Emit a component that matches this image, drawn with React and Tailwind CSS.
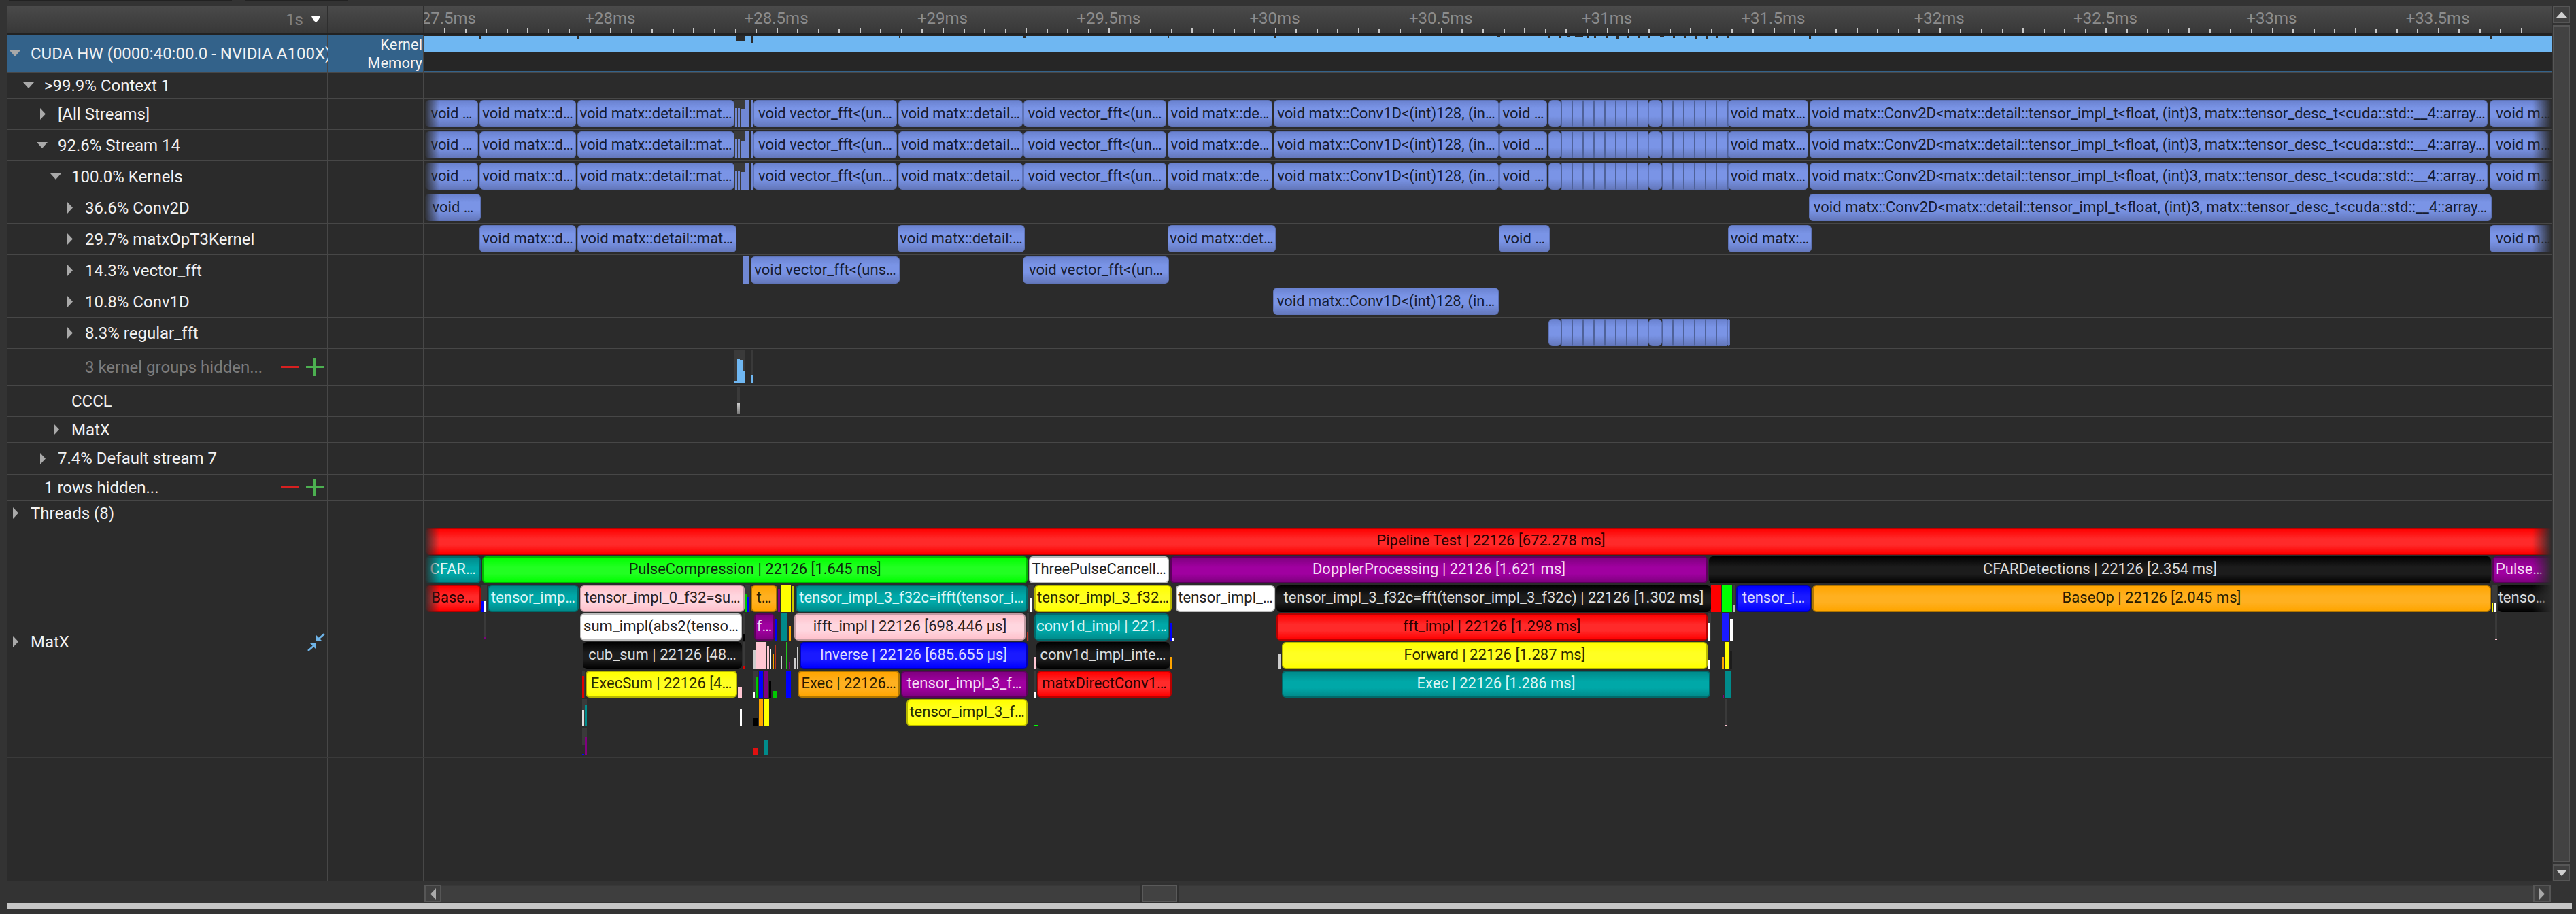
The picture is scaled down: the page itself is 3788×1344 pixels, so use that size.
import React from 'react';

const ORIGIN = 624;

// colour → gradient/border/text classes used by the flame chart
const TONES = {
  kernel: 'bg-[linear-gradient(#6a82d0,#7a94e6_30%,#7a94e6_60%,#6478bc)] border border-[#5f74b8] text-[#161c30]',
  red: 'bg-[linear-gradient(#ff0000,#ff2a2a_40%,#ff2a2a_65%,#ff0000)] border-2 border-[#b80000] text-[#2a0000]',
  green: 'bg-[linear-gradient(#00ff00,#22ff22_40%,#22ff22_65%,#00ff00)] border-2 border-[#00b800] text-[#0c2a0c]',
  white: 'bg-white border-2 border-[#bdbdbd] text-[#222222]',
  pink: 'bg-[linear-gradient(#ffc0cb,#ffd6df_40%,#ffd6df_65%,#ffc0cb)] border-2 border-[#c09aa2] text-[#2a2022]',
  teal: 'bg-[linear-gradient(#008b8b,#00a8a8_40%,#00a8a8_65%,#008b8b)] border-2 border-[#006a6a] text-[#dcf5f5]',
  purple: 'bg-[linear-gradient(#800080,#a000a0_40%,#a000a0_65%,#800080)] border-2 border-[#5c005c] text-[#f3dcf3]',
  black: 'bg-[linear-gradient(#000000,#1c1c1c_40%,#1c1c1c_65%,#000000)] text-[#dddddd]',
  yellow: 'bg-[linear-gradient(#ffff00,#ffff22_40%,#ffff22_65%,#ffff00)] border-2 border-[#b8b800] text-[#2a2a00]',
  orange: 'bg-[linear-gradient(#ffa500,#ffb020_40%,#ffb020_65%,#ffa500)] border-2 border-[#b07600] text-[#2a1c00]',
  blue: 'bg-[linear-gradient(#0000ff,#1a1aff_40%,#1a1aff_65%,#0000ff)] border-2 border-[#0000b4] text-[#dcdcff]',
};

const tickLabels = ['+27.5ms', '+28ms', '+28.5ms', '+29ms', '+29.5ms', '+30ms', '+30.5ms', '+31ms', '+31.5ms', '+32ms', '+32.5ms', '+33ms', '+33.5ms'];

const notches = [
  [705, 2, 4], [849, 2, 4], [1082, 14, 7], [1105, 2, 10], [1322, 2, 3], [1505, 3, 3], [1717, 2, 3], [1873, 3, 3],
  [2202, 4, 2], [2277, 2, 3], [2293, 3, 3], [2304, 4, 2], [2316, 12, 1], [2334, 3, 3], [2344, 3, 3], [2361, 3, 3],
  [2377, 3, 4], [2393, 3, 3], [2408, 3, 3], [2424, 3, 3], [2441, 6, 2], [2460, 3, 3], [2476, 3, 3], [2492, 3, 4],
  [2508, 3, 4], [2524, 3, 3], [2540, 3, 3], [2660, 3, 4], [3661, 3, 4],
];

const STRIPES = [2296, 2312, 2328, 2344, 2360, 2376, 2392, 2408];
const STRIPES2 = [2444, 2460, 2476, 2492, 2508, 2524];

const fftBlocks = (end) => [
  [2277, 2296, '', 'round'],
  ...STRIPES.map((x) => [x, x + 16, '', 'flat']),
  [2424, 2444, '', 'round'],
  ...STRIPES2.map((x) => [x, x + 16, '', 'flat']),
  [2540, end, '', end > 2541 ? 'round' : 'flat'],
];

const streamBlocks = [
  [625, 703, 'void …'],
  [705, 847, 'void matx::d…'],
  [849, 1080, 'void matx::detail::mat…'],
  [1108, 1319, 'void vector_fft<(un…'],
  [1321, 1504, 'void matx::detail…'],
  [1505, 1715, 'void vector_fft<(un…'],
  [1717, 1871, 'void matx::de…'],
  [1873, 2204, 'void matx::Conv1D<(int)128, (in…'],
  [2205, 2275, 'void …'],
  ...fftBlocks(2541),
  [2541, 2659, 'void matx…'],
  [2661, 3658, 'void matx::Conv2D<matx::detail::tensor_impl_t<float, (int)3, matx::tensor_desc_t<cuda::std::__4::array…'],
  [3661, 3760, 'void m…'],
];

const kernelTiny = [
  [1080, 16, 0, 40, 'bg-[#3a3a3a]'],
  [1081, 3, 12, 28, 'bg-[#7088d4]'],
  [1085, 3, 12, 28, 'bg-[#7088d4]'],
  [1089, 3, 14, 26, 'bg-[#7088d4]'],
  [1093, 3, 14, 26, 'bg-[#7088d4]'],
  [1096, 6, 0, 40, 'bg-[#7088d4]'],
  [1104, 3, 0, 40, 'bg-[#7088d4]'],
];

const events = [
  // row, x0, x1, tone, label
  [0, 625, 3760, 'red', 'Pipeline Test | 22126 [672.278 ms]'],
  [1, 625, 707, 'teal', 'CFAR…'],
  [1, 709, 1511, 'green', 'PulseCompression | 22126 [1.645 ms]'],
  [1, 1513, 1719, 'white', 'ThreePulseCancell…'],
  [1, 1721, 2511, 'purple', 'DopplerProcessing | 22126 [1.621 ms]'],
  [1, 2513, 3663, 'black', 'CFARDetections | 22126 [2.354 ms]'],
  [1, 3665, 3760, 'purple', 'Pulse…', 'pr-4'],
  [2, 625, 707, 'red', 'Base…'],
  [2, 717, 851, 'teal', 'tensor_imp…'],
  [2, 853, 1095, 'pink', 'tensor_impl_0_f32=su…'],
  [2, 1104, 1143, 'orange', 't…'],
  [2, 1170, 1511, 'teal', 'tensor_impl_3_f32c=ifft(tensor_i…'],
  [2, 1521, 1723, 'yellow', 'tensor_impl_3_f32…'],
  [2, 1729, 1875, 'white', 'tensor_impl_…'],
  [2, 1877, 2516, 'black', 'tensor_impl_3_f32c=fft(tensor_impl_3_f32c) | 22126 [1.302 ms]'],
  [2, 2553, 2663, 'blue', 'tensor_i…'],
  [2, 2665, 3663, 'orange', 'BaseOp | 22126 [2.045 ms]'],
  [2, 3673, 3760, 'black', 'tenso…', 'pr-4'],
  [3, 853, 1091, 'white', 'sum_impl(abs2(tenso…'],
  [3, 1109, 1139, 'purple', 'f…'],
  [3, 1168, 1508, 'pink', 'ifft_impl | 22126 [698.446 µs]'],
  [3, 1521, 1719, 'teal', 'conv1d_impl | 221…'],
  [3, 1877, 2511, 'red', 'fft_impl | 22126 [1.298 ms]'],
  [4, 857, 1091, 'black', 'cub_sum | 22126 [48…'],
  [4, 1176, 1511, 'blue', 'Inverse | 22126 [685.655 µs]'],
  [4, 1524, 1720, 'black', 'conv1d_impl_inte…'],
  [4, 1885, 2511, 'yellow', 'Forward | 22126 [1.287 ms]'],
  [5, 861, 1084, 'yellow', 'ExecSum | 22126 [4…'],
  [5, 1173, 1323, 'orange', 'Exec | 22126…'],
  [5, 1325, 1511, 'purple', 'tensor_impl_3_f…'],
  [5, 1525, 1723, 'red', 'matxDirectConv1…'],
  [5, 1885, 2515, 'teal', 'Exec | 22126 [1.286 ms]'],
  [6, 1333, 1511, 'yellow', 'tensor_impl_3_f…'],
];

// slivers too narrow to hold a label: row, x, width, top, height, colour
const slivers = [
  [2, 708, 8, 0, 40, 'bg-[#3a3a3a]'], [2, 708, 3, 24, 16, 'bg-[#0000ff]'], [2, 711, 3, 24, 16, 'bg-white'],
  [3, 711, 4, 0, 36, 'bg-[#3a3a3a]'], [3, 711, 3, 35, 2, 'bg-[#800080]'],
  [2, 1096, 7, 0, 40, 'bg-[#3a3a3a]'], [2, 1096, 2, 14, 26, 'bg-[#00c800]'], [2, 1099, 3, 18, 22, 'bg-[#0000ff]'],
  [2, 1144, 3, 6, 34, 'bg-[#800080]'], [2, 1148, 15, 0, 40, 'bg-[#ffff00]'], [2, 1164, 3, 2, 38, 'bg-[#c8c800]'],
  [2, 1512, 8, 0, 40, 'bg-[#3a3a3a]'], [2, 1515, 2, 20, 20, 'bg-white'],
  [2, 2516, 15, 0, 40, 'bg-[#ff0000]'], [2, 2532, 15, 0, 40, 'bg-[#00ff00]'], [2, 2548, 3, 0, 40, 'bg-[#3a3a3a]'], [2, 2548, 3, 30, 10, 'bg-[#bbbbbb]'],
  [2, 3664, 8, 0, 40, 'bg-[#3a3a3a]'], [2, 3664, 2, 26, 14, 'bg-[#ffff00]'], [2, 3668, 2, 26, 14, 'bg-white'],
  [3, 1092, 4, 0, 40, 'bg-[#3a3a3a]'], [3, 1092, 3, 30, 10, 'bg-black'],
  [3, 1140, 3, 8, 32, 'bg-[#0000ff]'], [3, 1148, 10, 0, 40, 'bg-[#008b8b]'], [3, 1160, 3, 18, 22, 'bg-[#ffa500]'],
  [3, 1510, 3, 0, 40, 'bg-[#3a3a3a]'], [3, 1510, 2, 28, 12, 'bg-[#b83020]'],
  [3, 1720, 3, 14, 26, 'bg-[#0000ff]'], [3, 1724, 3, 36, 4, 'bg-white'],
  [3, 2512, 4, 0, 40, 'bg-[#3a3a3a]'], [3, 2512, 3, 14, 26, 'bg-white'],
  [3, 2532, 11, 0, 40, 'bg-[#1a1aff]'], [3, 2544, 4, 8, 32, 'bg-white'],
  [4, 1092, 4, 0, 40, 'bg-[#3a3a3a]'], [4, 1092, 3, 36, 4, 'bg-[#e00000]'],
  [4, 1108, 3, 12, 28, 'bg-[#cccccc]'], [4, 1112, 15, 0, 40, 'bg-[#ffc6d2]'], [4, 1128, 3, 6, 34, 'bg-[#ffc6d2]'], [4, 1132, 2, 10, 30, 'bg-white'],
  [4, 1136, 2, 18, 22, 'bg-[#ffa500]'], [4, 1139, 2, 4, 36, 'bg-[#b83020]'], [4, 1148, 2, 20, 20, 'bg-[#cccccc]'], [4, 1156, 2, 0, 40, 'bg-[#22c822]'],
  [4, 1160, 2, 30, 10, 'bg-[#800080]'], [4, 1168, 3, 24, 16, 'bg-[#cccccc]'], [4, 1172, 2, 8, 32, 'bg-[#cccccc]'],
  [4, 1520, 3, 22, 18, 'bg-[#ffc6d2]'], [4, 1720, 3, 22, 18, 'bg-[#ffa500]'], [4, 1880, 3, 18, 22, 'bg-[#cccccc]'],
  [4, 2512, 3, 26, 14, 'bg-white'], [4, 2532, 3, 22, 18, 'bg-[#ffa500]'], [4, 2536, 7, 0, 40, 'bg-[#ffff00]'], [4, 2544, 3, 14, 26, 'bg-[#1c1c1c]'],
  [5, 856, 4, 0, 40, 'bg-[#3a3a3a]'], [5, 856, 3, 8, 32, 'bg-[#e00000]'],
  [5, 1085, 6, 24, 16, 'bg-[#ffc6d2]'],
  [5, 1108, 7, 0, 40, 'bg-[#3a3a3a]'], [5, 1108, 2, 32, 8, 'bg-white'], [5, 1112, 2, 10, 30, 'bg-[#00c800]'], [5, 1116, 6, 0, 40, 'bg-[#0000ff]'],
  [5, 1123, 7, 0, 40, 'bg-[#800080]'], [5, 1131, 3, 16, 24, 'bg-black'], [5, 1136, 7, 30, 10, 'bg-[#00c800]'], [5, 1156, 7, 0, 40, 'bg-[#0000ff]'],
  [5, 1520, 3, 0, 40, 'bg-[#3a3a3a]'], [5, 1520, 3, 32, 8, 'bg-white'], [5, 2536, 10, 0, 40, 'bg-[#008b8b]'], [5, 2533, 2, 36, 4, 'bg-[#800080]'],
  [6, 856, 7, 0, 40, 'bg-[#3a3a3a]'], [6, 860, 3, 8, 32, 'bg-[#008b8b]'], [6, 856, 3, 16, 24, 'bg-[#dddddd]'],
  [6, 1088, 3, 14, 26, 'bg-white'], [6, 1108, 7, 28, 12, 'bg-black'], [6, 1116, 6, 0, 40, 'bg-[#ffa500]'], [6, 1123, 8, 0, 40, 'bg-[#ffff00]'],
  [6, 1520, 6, 38, 2, 'bg-[#00ff00]'], [6, 2537, 2, 0, 38, 'bg-[#3a3a3a]'], [6, 2537, 2, 38, 2, 'bg-[#ffc6d2]'],
  [7, 856, 7, 0, 26, 'bg-[#3a3a3a]'], [7, 860, 3, 14, 26, 'bg-[#800080]'], [7, 856, 3, 38, 2, 'bg-[#0000ff]'],
  [7, 1108, 7, 30, 10, 'bg-[#e01010]'], [7, 1124, 6, 18, 22, 'bg-[#008b8b]'],
  [3, 3669, 3, 0, 38, 'bg-[#3a3a3a]'], [3, 3669, 3, 37, 2, 'bg-[#ffc6d2]'],
];

const Caret = ({ open }) =>
  open ? (
    <svg width="16" height="9" className="shrink-0">
      <polygon points="0,0 16,0 8,9" fill="#a9a9a9" />
    </svg>
  ) : (
    <svg width="8" height="17" className="ml-[5px] shrink-0">
      <polygon points="0,0 8,8.5 0,17" fill="#a9a9a9" />
    </svg>
  );

const HiddenControls = () => (
  <svg width="63" height="26" className="ml-auto mr-[5px] shrink-0">
    <rect x="0" y="11" width="26" height="3" fill="#d62020" />
    <rect x="37" y="11" width="26" height="3" fill="#4caf50" />
    <rect x="48" y="0" width="3" height="26" fill="#4caf50" />
  </svg>
);

const CollapseIcon = () => (
  <svg viewBox="12 6 26 26" width="26" height="26" className="ml-auto mr-[3px] shrink-0">
    <polygon points="25,9 25,18 34,18" fill="#6fb4e8" />
    <line x1="29" y1="14" x2="37" y2="7" stroke="#6fb4e8" strokeWidth="2.5" />
    <polygon points="15,20 25,20 25,30" fill="#6fb4e8" />
    <line x1="21" y1="25" x2="13" y2="32" stroke="#6fb4e8" strokeWidth="2.5" />
  </svg>
);

const Label = ({ pad, caret, tone = 'text-[#f2f2f2]', children, extra, selected }) => (
  <div className={`flex items-center h-full w-[472px] shrink-0 border-r-2 border-[#474747] ${pad} ${selected ? 'bg-[#33628a]' : ''}`}>
    <div className="w-[31px] shrink-0 flex items-center">{caret !== undefined && <Caret open={caret} />}</div>
    <span className={`whitespace-nowrap ${tone}`}>{children}</span>
    {extra}
  </div>
);

const KernelBlock = ({ x0, x1, label, shape }) => (
  <div
    className={`absolute top-[2px] h-[40px] pb-[2px] flex items-center justify-center overflow-hidden whitespace-nowrap text-[22px] ${TONES.kernel} ${shape === 'flat' ? 'rounded-none border-x-[#4f6299]' : 'rounded-[6px]'}`}
    style={{ left: x0 - ORIGIN, width: x1 - x0 }}
  >
    {label}
  </div>
);

const Sliver = ({ x, w, top, h, color }) => (
  <div className={`absolute ${color}`} style={{ left: x - ORIGIN, width: w, top, height: h }} />
);

const Fades = () => (
  <>
    <div className="absolute inset-y-0 left-0 w-[22px] bg-gradient-to-r from-[#2b2b2b] to-transparent" />
    <div className="absolute inset-y-0 right-0 w-[28px] bg-gradient-to-l from-[#2b2b2b] to-transparent" />
  </>
);

const Track = ({ children }) => <div className="relative flex-1 h-full overflow-hidden">{children}</div>;

const Row = ({ h, label, track, selected, info, line = 'border-[#474747]' }) => (
  <div className={`flex ${h} border-b ${line}`}>
    {label}
    <div className={`w-[141px] shrink-0 h-full border-r-2 border-[#474747] ${selected ? 'bg-[#33628a]' : ''}`}>{info}</div>
    <Track>{track}</Track>
  </div>
);

const KernelRow = ({ blocks, tiny = [] }) => (
  <>
    {tiny.map(([x, w, top, h, color], i) => (
      <Sliver key={i} x={x} w={w} top={top + 2} h={h} color={color} />
    ))}
    {blocks.map(([x0, x1, label, shape], i) => (
      <KernelBlock key={i} x0={x0} x1={x1} label={label} shape={shape} />
    ))}
    <Fades />
  </>
);

const FlameChart = () => (
  <>
    {slivers.map(([row, x, w, top, h, color], i) => (
      <Sliver key={i} x={x} w={w} top={2 + row * 42 + top} h={h} color={color} />
    ))}
    {events.map(([row, x0, x1, tone, label, extra], i) => (
      <div
        key={i}
        className={`absolute h-[40px] pb-[3px] flex items-center justify-center overflow-hidden whitespace-nowrap rounded-[6px] text-[22px] ${TONES[tone]} ${extra || ''}`}
        style={{ left: x0 - ORIGIN, width: x1 - x0, top: 2 + row * 42 }}
      >
        {label}
      </div>
    ))}
    <Fades />
  </>
);

const Ruler = () => (
  <div className="relative flex-1 h-full overflow-hidden bg-[linear-gradient(#4a4a4a,#383838)]">
    {tickLabels.map((text, i) => (
      <span
        key={text}
        className="absolute top-[3px] leading-[30px] w-[120px] text-center text-[#8c8c8c] whitespace-nowrap"
        style={{ left: 653 + i * 244.3 - ORIGIN - 60 }}
      >
        {text}
      </span>
    ))}
    <svg className="absolute left-0 top-0" width="3130" height="39">
      {Array.from({ length: 102 }, (_, k) => {
        const x = 653 + (k - 1) * 30.54 - ORIGIN;
        const major = (k - 1) % 4 === 0;
        return <rect key={k} x={Math.round(x)} y={major ? 32 : 34} width="2" height={major ? 7 : 5} fill="#c8c8c8" />;
      })}
    </svg>
  </div>
);

const ScrollButton = ({ className, children }) => (
  <div className={`flex items-center justify-center bg-[#404040] border-2 border-[#565656] ${className}`}>{children}</div>
);

export default function App() {
  return (
    <div className="w-[3788px] h-[1344px] flex flex-col overflow-hidden bg-[#333333] text-[24px] font-['Roboto',sans-serif]">
      <div className="flex h-[9px] shrink-0 items-start pl-[13px]">
        <div className="w-[328px] h-[1px] bg-[#222222]" />
        <div className="w-[152px] h-[1px] ml-[19px] bg-[#222222]" />
      </div>

      <div className="flex h-[1287px] shrink-0 pl-[11px]">
        <div className="w-[3741px] shrink-0 flex flex-col">
          <div className="flex h-[39px] shrink-0">
            <div className="w-[472px] shrink-0 flex items-center justify-end pr-[10px] border-r-2 border-[#2e2e2e] bg-[linear-gradient(#4a4a4a,#383838)]">
              <span className="text-[#808080] mr-[12px]">1s</span>
              <svg width="13" height="9">
                <path d="M0,0 H13 L10,6 L6.5,9 L3,6 Z" fill="#ffffff" />
              </svg>
            </div>
            <div className="w-[141px] shrink-0 border-r-2 border-[#2e2e2e] bg-[linear-gradient(#4a4a4a,#383838)]" />
            <Ruler />
          </div>
          <div className="h-[3px] shrink-0 bg-[#222222]" />

          <div className="flex-1 bg-[#2b2b2b] flex flex-col">
            <Row
              h="h-[56px]"
              selected
              label={<Label pad="pl-[3px]" caret={true} selected>CUDA HW (0000:40:00.0 - NVIDIA A100X)</Label>}
              info={
                <div className="h-full flex flex-col justify-center items-end pr-[1px] pt-[1px] text-[22px] leading-[27px] text-[#f2f2f2]">
                  <span>Kernel</span>
                  <span>Memory</span>
                </div>
              }
              track={
                <div className="h-full bg-[#262626] border-b-2 border-[#33628a] relative">
                  <div className="absolute top-[2px] left-0 right-0 h-[24px] bg-[#6fb7f2]" />
                  {notches.map(([x, w, h], i) => (
                    <Sliver key={i} x={x} w={w} top={2} h={h} color="bg-[#2b2b2b]" />
                  ))}
                </div>
              }
            />
            <Row h="h-[38px]" label={<Label pad="pl-[23px]" caret={true}>&gt;99.9% Context 1</Label>} />
            <Row h="h-[46px]" label={<Label pad="pl-[43px]" caret={false}>[All Streams]</Label>} track={<KernelRow blocks={streamBlocks} tiny={kernelTiny} />} />
            <Row h="h-[46px]" label={<Label pad="pl-[43px]" caret={true}>92.6% Stream 14</Label>} track={<KernelRow blocks={streamBlocks} tiny={kernelTiny} />} />
            <Row h="h-[46px]" label={<Label pad="pl-[63px]" caret={true}>100.0% Kernels</Label>} track={<KernelRow blocks={streamBlocks} tiny={kernelTiny} />} />
            <Row
              h="h-[46px]"
              label={<Label pad="pl-[83px]" caret={false}>36.6% Conv2D</Label>}
              track={
                <KernelRow
                  blocks={[
                    [625, 707, 'void …'],
                    [2660, 3664, 'void matx::Conv2D<matx::detail::tensor_impl_t<float, (int)3, matx::tensor_desc_t<cuda::std::__4::array…'],
                  ]}
                />
              }
            />
            <Row
              h="h-[46px]"
              label={<Label pad="pl-[83px]" caret={false}>29.7% matxOpT3Kernel</Label>}
              track={
                <KernelRow
                  blocks={[
                    [705, 847, 'void matx::d…'],
                    [849, 1083, 'void matx::detail::mat…'],
                    [1320, 1507, 'void matx::detail:…'],
                    [1717, 1876, 'void matx::det…'],
                    [2204, 2279, 'void …'],
                    [2541, 2664, 'void matx:…'],
                    [3661, 3760, 'void m…'],
                  ]}
                />
              }
            />
            <Row
              h="h-[46px]"
              label={<Label pad="pl-[83px]" caret={false}>14.3% vector_fft</Label>}
              track={
                <KernelRow
                  tiny={[[1092, 10, 0, 40, 'bg-[#7088d4]']]}
                  blocks={[
                    [1104, 1323, 'void vector_fft<(uns…'],
                    [1504, 1719, 'void vector_fft<(un…'],
                  ]}
                />
              }
            />
            <Row
              h="h-[46px]"
              label={<Label pad="pl-[83px]" caret={false}>10.8% Conv1D</Label>}
              track={<KernelRow blocks={[[1872, 2204, 'void matx::Conv1D<(int)128, (in…']]} />}
            />
            <Row
              h="h-[46px]"
              label={<Label pad="pl-[83px]" caret={false}>8.3% regular_fft</Label>}
              track={<KernelRow blocks={fftBlocks(2544)} />}
            />
            <Row
              h="h-[54px]"
              label={<Label pad="pl-[83px]" tone="text-[#7c7c7c]" extra={<HiddenControls />}>3 kernel groups hidden...</Label>}
              track={
                <>
                  <Sliver x={1080} w={16} top={2} h={48} color="bg-[#3a3a3a]" />
                  <Sliver x={1080} w={4} top={47} h={3} color="bg-[#6fb7f2]" />
                  <Sliver x={1084} w={4} top={15} h={35} color="bg-[#6fb7f2]" />
                  <Sliver x={1088} w={4} top={17} h={33} color="bg-[#6fb7f2]" />
                  <Sliver x={1092} w={4} top={32} h={18} color="bg-[#6fb7f2]" />
                  <Sliver x={1104} w={4} top={2} h={48} color="bg-[#3a3a3a]" />
                  <Sliver x={1104} w={4} top={38} h={12} color="bg-[#6fb7f2]" />
                </>
              }
            />
            <Row
              h="h-[46px]"
              label={<Label pad="pl-[63px]">CCCL</Label>}
              track={
                <>
                  <Sliver x={1084} w={4} top={2} h={40} color="bg-[#3a3a3a]" />
                  <Sliver x={1084} w={4} top={25} h={17} color="bg-[linear-gradient(#d0d0d0,#777777)]" />
                </>
              }
            />
            <Row h="h-[38px]" label={<Label pad="pl-[63px]" caret={false}>MatX</Label>} />
            <Row h="h-[47px]" label={<Label pad="pl-[43px]" caret={false}>7.4% Default stream 7</Label>} />
            <Row h="h-[38px]" label={<Label pad="pl-[23px]" extra={<HiddenControls />}>1 rows hidden...</Label>} />
            <Row h="h-[38px]" label={<Label pad="pl-[3px]" caret={false}>Threads (8)</Label>} />
            <Row h="h-[340px]" line="border-[#3a3a3a]" label={<Label pad="pl-[3px]" caret={false} extra={<CollapseIcon />}>MatX</Label>} track={<FlameChart />} />
            <div className="flex flex-1">
              <div className="w-[472px] shrink-0 border-r-2 border-[#474747]" />
              <div className="w-[141px] shrink-0 border-r-2 border-[#474747]" />
            </div>
          </div>
        </div>

        <div className="w-[36px] shrink-0 flex flex-col pl-[2px] pr-[9px] gap-[3px]">
          <ScrollButton className="h-[25px] shrink-0">
            <svg width="16" height="9"><polygon points="8,0 16,9 0,9" fill="#cfcfcf" /></svg>
          </ScrollButton>
          <div className="flex-1 bg-[#424242] border-2 border-[#565656]" />
          <ScrollButton className="h-[25px] shrink-0">
            <svg width="16" height="9"><polygon points="0,0 16,0 8,9" fill="#cfcfcf" /></svg>
          </ScrollButton>
        </div>
      </div>

      <div className="h-[5px] shrink-0" />
      <div className="flex h-[26px] shrink-0 pl-[624px] pr-[37px]">
        <ScrollButton className="w-[25px] shrink-0">
          <svg width="8" height="17"><polygon points="8,0 8,17 0,8.5" fill="#a9a9a9" /></svg>
        </ScrollButton>
        <div className="flex-1 flex bg-[#3e3e3e] border-t-2 border-[#383838] pl-[1030px]">
          <div className="w-[52px] -mt-[2px] h-[26px] bg-[#424242] border-2 border-[#5a5a5a] outline-2 outline-[#303030]" />
        </div>
        <ScrollButton className="w-[26px] shrink-0">
          <svg width="8" height="17"><polygon points="0,0 8,8.5 0,17" fill="#a9a9a9" /></svg>
        </ScrollButton>
      </div>
      <div className="h-[1px] shrink-0" />
      <div className="h-[8px] ml-[10px] mr-[6px] shrink-0 bg-[#c6c6c6]" />
    </div>
  );
}
